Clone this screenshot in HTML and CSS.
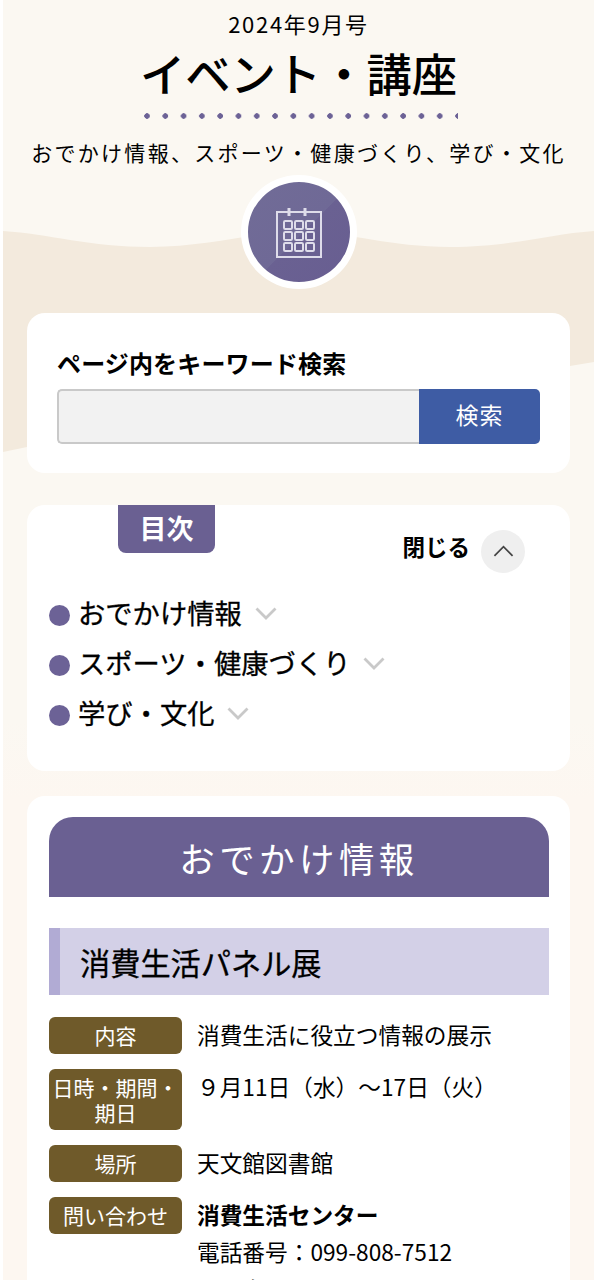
FILE: index.html
```html
<!DOCTYPE html>
<html lang="ja">
<head>
<meta charset="utf-8">
<title>イベント・講座</title>
<link rel="stylesheet" href="styles.css">
</head>
<body>
<div class="page">
  <svg class="wave" viewBox="0 0 591 460" aria-hidden="true"><path d="M0 231C47 234 87 247 147 247C207 247 247 232 297 232C347 232 387 247 447 247C507 247 547 234 591 231V362L567 366C400 380 200 420 24 447L0 452Z"/></svg>
  <header class="hero">
    <p class="issue">2024年9月号</p>
    <h1 class="title">イベント・講座</h1>
    <div class="dots"></div>
    <p class="subtitle">おでかけ情報、スポーツ・健康づくり、学び・文化</p>
    <div class="badge">
      <svg viewBox="0 0 46 51" class="cal" fill="none" stroke="#dedcea" stroke-width="2">
        <path d="M1 5H45V50H1Z"/>
        <path d="M13 1V9M29 1V9" stroke-width="3"/>
        <rect x="8" y="14" width="8" height="8" rx="1.2"/><rect x="19" y="14" width="8" height="8" rx="1.2"/><rect x="30" y="14" width="8" height="8" rx="1.2"/>
        <rect x="8" y="25" width="8" height="8" rx="1.2"/><rect x="19" y="25" width="8" height="8" rx="1.2"/><rect x="30" y="25" width="8" height="8" rx="1.2"/>
        <rect x="8" y="36" width="8" height="8" rx="1.2"/><rect x="19" y="36" width="8" height="8" rx="1.2"/><rect x="30" y="36" width="8" height="8" rx="1.2"/>
      </svg>
    </div>
  </header>

  <section class="card search">
    <label class="search-label" for="q">ページ内をキーワード検索</label>
    <div class="search-row">
      <input class="search-input" id="q" type="text">
      <button class="search-btn" type="button">検索</button>
    </div>
  </section>

  <nav class="card toc">
    <div class="toc-top">
      <div class="toc-tab">目次</div>
      <div class="toc-close">
        <span class="close-label">閉じる</span>
        <span class="close-btn"><svg viewBox="0 0 22 12" class="chev-up"><path d="M1.5 11L11 1.5L20.5 11"/></svg></span>
      </div>
    </div>
    <ul class="toc-list">
      <li class="toc-item"><span class="bullet"></span><span class="toc-text">おでかけ情報</span><svg viewBox="0 0 22 13" class="chev-down"><path d="M1.5 1.5L11 11L20.5 1.5"/></svg></li>
      <li class="toc-item"><span class="bullet"></span><span class="toc-text">スポーツ・健康づくり</span><svg viewBox="0 0 22 13" class="chev-down"><path d="M1.5 1.5L11 11L20.5 1.5"/></svg></li>
      <li class="toc-item"><span class="bullet"></span><span class="toc-text">学び・文化</span><svg viewBox="0 0 22 13" class="chev-down"><path d="M1.5 1.5L11 11L20.5 1.5"/></svg></li>
    </ul>
  </nav>

  <main class="card content">
    <h2 class="section-title">おでかけ情報</h2>
    <h3 class="event-title">消費生活パネル展</h3>
    <dl class="details">
      <dt class="tag">内容</dt>
      <dd class="val">消費生活に役立つ情報の展示</dd>
      <dt class="tag">日時・期間・期日</dt>
      <dd class="val">９月11日（水）～17日（火）</dd>
      <dt class="tag">場所</dt>
      <dd class="val">天文館図書館</dd>
      <dt class="tag">問い合わせ</dt>
      <dd class="val"><strong>消費生活センター</strong><br>電話番号：099-808-7512<br>ファクス：099-806-7531</dd>
    </dl>
  </main>
</div>
</body>
</html>
```

FILE: styles.css
```css
* { box-sizing: border-box; }
html, body { margin: 0; height: 1280px; overflow: hidden; background: #fff; }
body { font-family: "Noto Sans CJK JP", "Noto Sans", sans-serif; color: #000; }
p, h1, h2, h3, ul, dl, dd { margin: 0; padding: 0; }

.page {
  position: relative;
  margin: 0 3px;
  height: 1280px;
  overflow: hidden;
  background: linear-gradient(#fbf8f2 0, #fbf8f2 720px, #fdf7f1 800px);
}
.wave { position: absolute; left: 0; top: 0; width: 591px; height: 460px; }
.wave path { fill: #f3eadd; }

.hero { position: relative; display: flex; flex-direction: column; align-items: center; height: 313px; padding-top: 9px; }
.issue { font-size: 22px; line-height: 28px; letter-spacing: 1.7px; }
.title { font-size: 45.3px; line-height: 56px; font-weight: 500; margin-top: 7px; }
.dots {
  width: 314px; height: 6px; margin-top: 13px; margin-left: 4px;
  background: radial-gradient(circle at 3px 3px, #6c6296 2.5px, transparent 3px) 0 0 / 18.3px 6px repeat-x;
}
.subtitle { font-size: 21px; line-height: 30px; letter-spacing: 2.3px; margin-top: 18px; white-space: nowrap; }
.badge {
  width: 116px; height: 114px; margin-top: 8px;
  display: flex; align-items: center; justify-content: center;
  background: linear-gradient(135deg, #716c97 0, #6f6996 52%, #6a6192 52.5%, #685e91 100%);
  border: 7px solid #fff; border-radius: 50%;
}
.cal { width: 46px; height: 51px; }

.card { position: relative; width: 543px; margin-left: 24px; background: #fff; border-radius: 18px; }

.search { height: 160px; padding: 34px 30px 0; }
.search-label { display: block; font-size: 24px; line-height: 32px; font-weight: 700; letter-spacing: 0.15px; }
.search-row { display: flex; height: 55px; margin-top: 10px; }
.search-input { width: 362px; height: 55px; margin: 0; background: #f2f2f2; border: 2px solid #c9c9c9; border-right: 0; border-radius: 5px 0 0 5px; }
.search-btn {
  width: 121px; height: 55px; margin: 0; padding: 0 0 4px; border: 0; border-radius: 0 5px 5px 0;
  background: #3e5ca4; color: #fff; font: 400 23px/1 "Noto Sans CJK JP", sans-serif; letter-spacing: 1px;
}

.toc { height: 266px; margin-top: 32px; }
.toc-top { display: flex; justify-content: space-between; height: 68px; }
.toc-tab {
  width: 97px; height: 48px; margin-left: 91px; padding-bottom: 4px;
  display: flex; align-items: center; justify-content: center;
  background: #6a6092; color: #fff; border-radius: 0 0 8px 8px;
  font-size: 27px; font-weight: 700;
}
.toc-close { display: flex; align-items: center; gap: 11px; height: 44px; margin: 24px 45px 0 0; font-size: 22.5px; font-weight: 700; }
.close-label { margin-bottom: 10px; }
.close-btn { width: 44px; height: 43px; display: flex; align-items: center; justify-content: center; background: #efefef; border-radius: 50%; }
.chev-up { width: 21px; height: 12px; fill: none; stroke: #444; stroke-width: 1.8; }

.toc-list { list-style: none; margin-top: 17px; padding-left: 22px; }
.toc-item { display: flex; align-items: center; height: 50px; font-size: 27.3px; font-weight: 400; }
.bullet { width: 21px; height: 21px; margin-right: 8px; border-radius: 50%; background: #6c6296; }
.toc-text { margin-bottom: 6px; -webkit-text-stroke: 0.3px #000; }
.chev-down { width: 22px; height: 13px; margin: 0 0 3px 13px; fill: none; stroke: #c9c9c9; stroke-width: 2.8; }

.content { height: 600px; margin-top: 25px; padding: 21px 21px 0 22px; }
.section-title {
  height: 80px; display: flex; align-items: center; justify-content: center;
  background: #6a6092; color: #fff; border-radius: 24px 24px 0 0;
  font-size: 35.5px; font-weight: 400; letter-spacing: 4.4px;
}
.event-title {
  height: 67px; margin-top: 31px; padding-left: 20px;
  display: flex; align-items: center;
  background: #d3d0e7; border-left: 11px solid #b1abd4;
  font-size: 30.2px; font-weight: 400; -webkit-text-stroke: 0.3px #000;
}
.details { display: grid; grid-template-columns: 133px 1fr; column-gap: 15px; row-gap: 15px; margin-top: 22px; align-items: start; }
.tag {
  min-height: 37px; padding: 5.5px 2px; display: flex; align-items: center; justify-content: center;
  background: #6f5a2a; color: #fff; border-radius: 6px; text-align: center;
  font-size: 21px; line-height: 25px;
}
.val { font-size: 22.7px; line-height: 37px; margin-top: -1.5px; }
.val strong { font-weight: 700; }
```
